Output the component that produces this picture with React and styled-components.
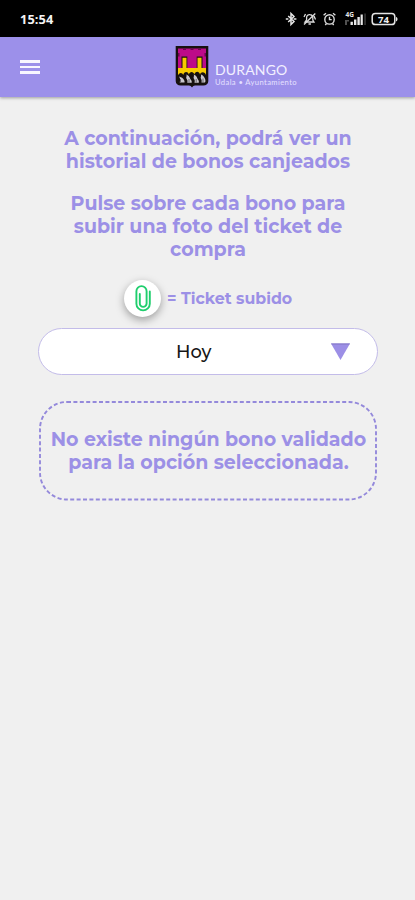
import React from "react"
import styled, { createGlobalStyle } from "styled-components"

const GlobalStyle = createGlobalStyle`
  * {
    box-sizing: border-box;
  }
  body {
    margin: 0;
    background: #f0f0f0;
    font-family: Montserrat, Inter, sans-serif;
  }
  p {
    margin: 0;
  }
`

const Screen = styled.div`
  width: 415px;
  height: 900px;
  overflow: hidden;
  background: #f0f0f0;
`
const StatusBar = styled.div`
  height: 37px;
  padding: 1px 16px 0 20px;
  background: #000;
  color: #f4f4f4;
  display: flex;
  align-items: center;
  justify-content: space-between;
`
const Clock = styled.span`
  font: 700 12.8px "Open Sans", sans-serif;
  letter-spacing: 0.1px;
`
const StatusIcons = styled.div`
  display: flex;
  svg {
    display: block;
  }
`
const Header = styled.header`
  height: 60px;
  padding: 7px 20px 0;
  display: flex;
  background: #9c90ea;
  box-shadow: 0 1px 3px rgba(0, 0, 0, 0.35);
`
const MenuButton = styled.button`
  width: 20px;
  height: 14px;
  margin: 16px 135px 0 0;
  padding: 0;
  border: 0;
  background: none;
  display: flex;
  flex-direction: column;
  justify-content: space-between;
`
const MenuLine = styled.span`
  width: 20px;
  height: 2.6px;
  background: #f8f6ff;
`
const Brand = styled.div`
  display: flex;
  svg {
    display: block;
  }
`
const BrandText = styled.div`
  padding: 18px 0 0 6px;
  color: #f3f0ff;
  white-space: nowrap;
`
const BrandName = styled.p`
  font: 400 14px/16px Lato, sans-serif;
  letter-spacing: 0.15px;
`
const BrandSub = styled.p`
  font: 400 7.6px/9px Lato, sans-serif;
  letter-spacing: 0.4px;
  color: #e6e1ff;
`
const Content = styled.main`
  padding: 29.5px 37px 0 38px;
  display: flex;
  flex-direction: column;
`
const Paragraph = styled.div`
  margin-bottom: 19px;
  display: flex;
  flex-direction: column;
  align-items: center;
`
const Line = styled.p`
  font-size: 19px;
  font-weight: 700;
  line-height: 23.2px;
  color: #9c90e6;
  white-space: nowrap;
`
const Legend = styled.div`
  margin-top: -1px;
  padding-left: 86px;
  display: flex;
  align-items: center;
`
const Badge = styled.div`
  width: 37px;
  height: 37px;
  margin-right: 6px;
  border-radius: 50%;
  background: #fff;
  display: flex;
  align-items: center;
  justify-content: center;
  box-shadow: 0 3px 8px rgba(0, 0, 0, 0.35);
`
const LegendText = styled.p`
  font-size: 15.8px;
  font-weight: 700;
  color: #9c90e6;
  white-space: nowrap;
`
const Select = styled.button`
  height: 47px;
  margin-top: 11px;
  padding: 0 27px 0 137px;
  border: 1px solid #c3bce9;
  border-radius: 24px;
  background: #fff;
  color: #161616;
  font: 500 17.8px Montserrat, Inter, sans-serif;
  display: flex;
  align-items: center;
  justify-content: space-between;
`
const EmptyBox = styled.div`
  height: 100px;
  margin: 26px 0 0 1px;
  padding-top: 27px;
  position: relative;
  display: flex;
  flex-direction: column;
  align-items: center;
`
const DashedFrame = styled.svg`
  position: absolute;
  top: 0;
  left: 0;
`

const Bluetooth = () => (
  <g transform="translate(285 12)" fill="none" stroke="#e6e6e6" strokeWidth="1.5">
    <path d="M3.2 4 9 9.5 6 12.5V1.5l3 3L3.2 10" />
    <path d="M.8 7h2.6M8.6 7h2.8" />
  </g>
)

const BellOff = () => (
  <g transform="translate(303 12)" fill="none" stroke="#dcdcdc" strokeWidth="1.3">
    <path d="M2 10h9L9.8 8V5.5A3 3 0 0 0 7 2.6a3 3 0 0 0-3.4 3V8L2 10Z" />
    <path d="M5.5 12h2.4M1 12.5 12.3 1.5M1 5l1.5-3M11 4l1.5 3.5" />
  </g>
)

const Alarm = () => (
  <g transform="translate(322 12)" fill="none" stroke="#dedede" strokeWidth="1.4">
    <circle cx="7.5" cy="7.4" r="4.7" />
    <path d="M7.5 4.8v2.8h2.2M1.6 3.3 4 1.3M13.4 3.3 11 1.3M4.5 11.5 3.3 13M10.5 11.5l1.2 1.5" />
  </g>
)

const Signal = () => (
  <g fill="#e8e8e8">
    <text x="345.5" y="17.3" fontSize="6.5" fontWeight="700" fontFamily="Open Sans">4G</text>
    <path d="M350.5 21.8h2.4V25h-2.4zM354 19.6h2.4V25H354zM357.4 17h2.4v8h-2.4zM360.6 14.5h2.2V25h-2.2z" />
    <path d="M345 20h4v1.4h-2V25h-2z" opacity="0.35" />
    <path d="M364.3 13.5h1.5V25h-1.5z" opacity="0.25" />
  </g>
)

const Battery = () => (
  <g>
    <rect x="372.2" y="13.4" width="22.6" height="11.2" rx="3.2" fill="none" stroke="#e5e5e5" strokeWidth="1.5" />
    <path d="M396 17v4.4c2-.5 2-3.9 0-4.4Z" fill="#e5e5e5" />
    <text x="383.5" y="22.6" textAnchor="middle" fontSize="9.6" fontWeight="700" fontFamily="Open Sans" fill="#f0f0f0">74</text>
  </g>
)

const Shield = () => (
  <svg width="34" height="44" viewBox="0 0 34 44">
    <path d="M.7 2h32.6v35c0 3-2 4.4-5 4.4H20c-1.4 0-2.2.8-3 2-.8-1.2-1.6-2-3-2H5.7c-3 0-5-1.4-5-4.4Z" fill="#17110f" />
    <path d="M3 4.5h28V25H3z" fill="#bd0a89" />
    <path d="M8 4.5h3v1.5H8zM15.5 4.5h3V6h-3zM23 4.5h3V6h-3zM3 9h1.5v3.5H3zM29.5 9H31v3.5h-1.5z" fill="#68074e" />
    <path d="M3 24h28v7H3z" fill="#f7ca00" />
    <path d="M6.5 12.5h5.8V24H6.5zM21.7 12.5h5.8V24h-5.8z" fill="#17110f" />
    <path d="M7.5 13.8h4V26h-4zM22.5 13.8h4V26h-4z" fill="#f7ca00" />
    <path d="M3 31.5c.8-3.4 4.6-3.4 5.2-.4.8-3.8 4.6-4 5.6-.6.8-3.4 4.8-3.4 5.6 0 .8-3.6 4.8-3.6 5.6 0 .8-3 5-3.2 6 .6V38H3Z" fill="#17110f" />
    <path d="M4 32.5c1.4 2 1.4 3.5.7 6h4.8c.6-2-1-3.5-2.4-4.8ZM11.3 30.5c1 1.3-.8 3 .2 4.3 1 1.3 1.2 2.2.8 4h4.4c.5-2.3-1-3-1.6-4.4-.6-1.6-1.8-3.3-3.8-3.9ZM18.7 30.5c1 1.3-.8 3 .2 4.3 1 1.3 1 2.2.6 4h4.3c.5-2.3-.8-3-1.4-4.4-.5-1.6-1.7-3.3-3.7-3.9ZM25.8 30.5c1 1.3-.8 3 .2 4.3.8 1.2.8 2.2.4 3.7h3.6c.9-1.5.4-3.2-.4-4.6-.5-1.3-1.8-2.8-3.8-3.4Z" fill="#c9c6cc" />
    <path d="M5.5 35v3M14 35v3.5M21.2 35v3.5M28 34.5V38" stroke="#55505a" strokeWidth="0.8" />
  </svg>
)

const Clip = () => (
  <svg width="16" height="27" viewBox="0 0 16 27" fill="none" stroke="#1fce6d" strokeWidth="1.9" strokeLinecap="round">
    <path d="M14.8 6.5v12.2a6.7 6.7 0 0 1-13.4 0V6.2a5.1 5.1 0 0 1 10.2 0v12.3a3.4 3.4 0 0 1-6.8 0V9" />
  </svg>
)

const intro = [
  ["A continuación, podrá ver un", "historial de bonos canjeados"],
  ["Pulse sobre cada bono para", "subir una foto del ticket de", "compra"],
]

const emptyMessage = [
  "No existe ningún bono validado",
  "para la opción seleccionada.",
]

const App = () => {
  return (
    <Screen>
      <GlobalStyle />
      <StatusBar>
        <Clock>15:54</Clock>
        <StatusIcons>
          <svg width="115" height="35" viewBox="284 2 115 35">
            <Bluetooth />
            <BellOff />
            <Alarm />
            <Signal />
            <Battery />
          </svg>
        </StatusIcons>
      </StatusBar>
      <Header>
        <MenuButton aria-label="Menú">
          <MenuLine />
          <MenuLine />
          <MenuLine />
        </MenuButton>
        <Brand>
          <Shield />
          <BrandText>
            <BrandName>DURANGO</BrandName>
            <BrandSub>Udala • Ayuntamiento</BrandSub>
          </BrandText>
        </Brand>
      </Header>
      <Content>
        {intro.map((lines, index) => (
          <Paragraph key={index}>
            {lines.map(el => (
              <Line key={el}>{el}</Line>
            ))}
          </Paragraph>
        ))}
        <Legend>
          <Badge>
            <Clip />
          </Badge>
          <LegendText>= Ticket subido</LegendText>
        </Legend>
        <Select>
          Hoy
          <svg width="19" height="17" viewBox="0 0 19 17">
            <path d="M0 .5h19L9.5 17Z" fill="#9c8fe6" />
            <path d="M0 .5h19l-.6 1H.6Z" fill="#8176c4" />
          </svg>
        </Select>
        <EmptyBox>
          <DashedFrame width="338" height="100">
            <rect x="1" y="1" width="336" height="97.5" rx="27" fill="none" stroke="#9489db" strokeWidth="1.9" strokeDasharray="4 2.4" />
          </DashedFrame>
          {emptyMessage.map(el => (
            <Line key={el}>{el}</Line>
          ))}
        </EmptyBox>
      </Content>
    </Screen>
  )
}

export default App
